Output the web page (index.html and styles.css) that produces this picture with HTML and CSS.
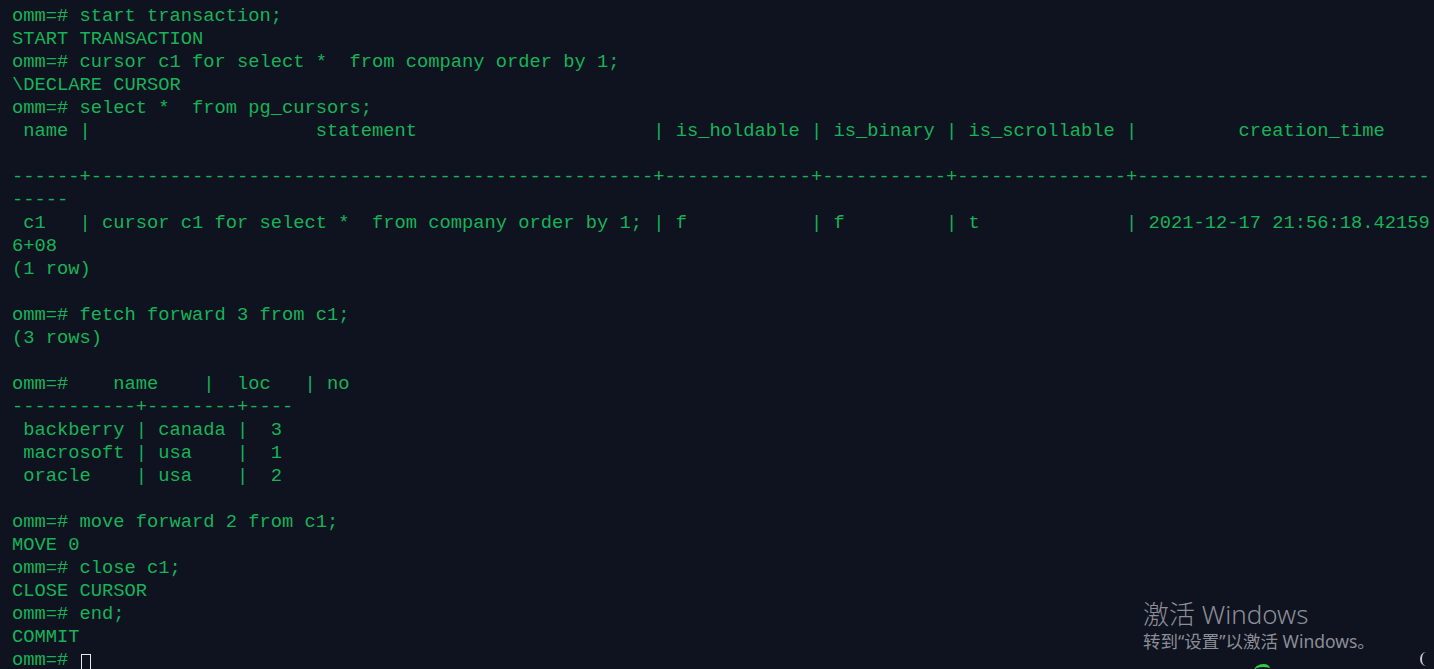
FILE: index.html
```html
<!DOCTYPE html>
<html lang="zh-CN">
<head>
<meta charset="utf-8">
<title>gsql terminal</title>
<link rel="stylesheet" href="styles.css">
</head>
<body>
<main class="term">
<pre class="out">omm=# start transaction;
START TRANSACTION
omm=# cursor c1 for select *  from company order by 1;
\DECLARE CURSOR
omm=# select *  from pg_cursors;
 name |                    statement                     | is_holdable | is_binary | is_scrollable |         creation_time
     
------+--------------------------------------------------+-------------+-----------+---------------+--------------------------
-----
 c1   | cursor c1 for select *  from company order by 1; | f           | f         | t             | 2021-12-17 21:56:18.42159
6+08
(1 row)

omm=# fetch forward 3 from c1;
(3 rows)

omm=#    name    |  loc   | no
-----------+--------+----
 backberry | canada |  3
 macrosoft | usa    |  1
 oracle    | usa    |  2

omm=# move forward 2 from c1;
MOVE 0
omm=# close c1;
CLOSE CURSOR
omm=# end;
COMMIT
omm=# <span class="cursor"> </span></pre>
</main>
<aside class="activate">
  <div class="act-title">激活 Windows</div>
  <div class="act-sub">转到“设置”以激活 Windows。</div>
</aside>
<div class="tray-green"></div>
<div class="tray-power"></div>
</body>
</html>
```

FILE: styles.css
```css
html, body {
  margin: 0;
  padding: 0;
  background: #0f121f;
  height: 100%;
  overflow: hidden;
}
.term {
  padding: 5px 0 0 12px;
}
.out {
  margin: 0;
  font-family: "Liberation Mono", "Courier New", monospace;
  font-size: 18.75px;
  line-height: 23px;
  color: #17b358;
  white-space: pre;
}
.cursor {
  display: inline-block;
  width: 8px;
  height: 21px;
  border: 1px solid #e8e8e8;
  vertical-align: -6px;
  margin-left: 1px;
}
.activate {
  position: absolute;
  left: 1143px;
  top: 600px;
  color: #8b8e96;
  font-family: "Noto Sans", "Noto Sans CJK SC", sans-serif;
}
.act-title {
  font-size: 26px;
  line-height: 29px;
  font-weight: 300;
}
.act-sub {
  font-size: 17.5px;
  line-height: 24px;
}
.tray-green {
  position: absolute;
  left: 1254px;
  top: 664px;
  width: 16px;
  height: 8px;
  border-top: 3px solid #2ecc40;
  border-radius: 60% 40% 0 0;
}
.tray-power {
  position: absolute;
  left: 1420px;
  top: 652px;
  width: 10px;
  height: 14px;
  border-left: 2px solid #c8c8c8;
  border-radius: 50% 0 0 50%;
}
```
